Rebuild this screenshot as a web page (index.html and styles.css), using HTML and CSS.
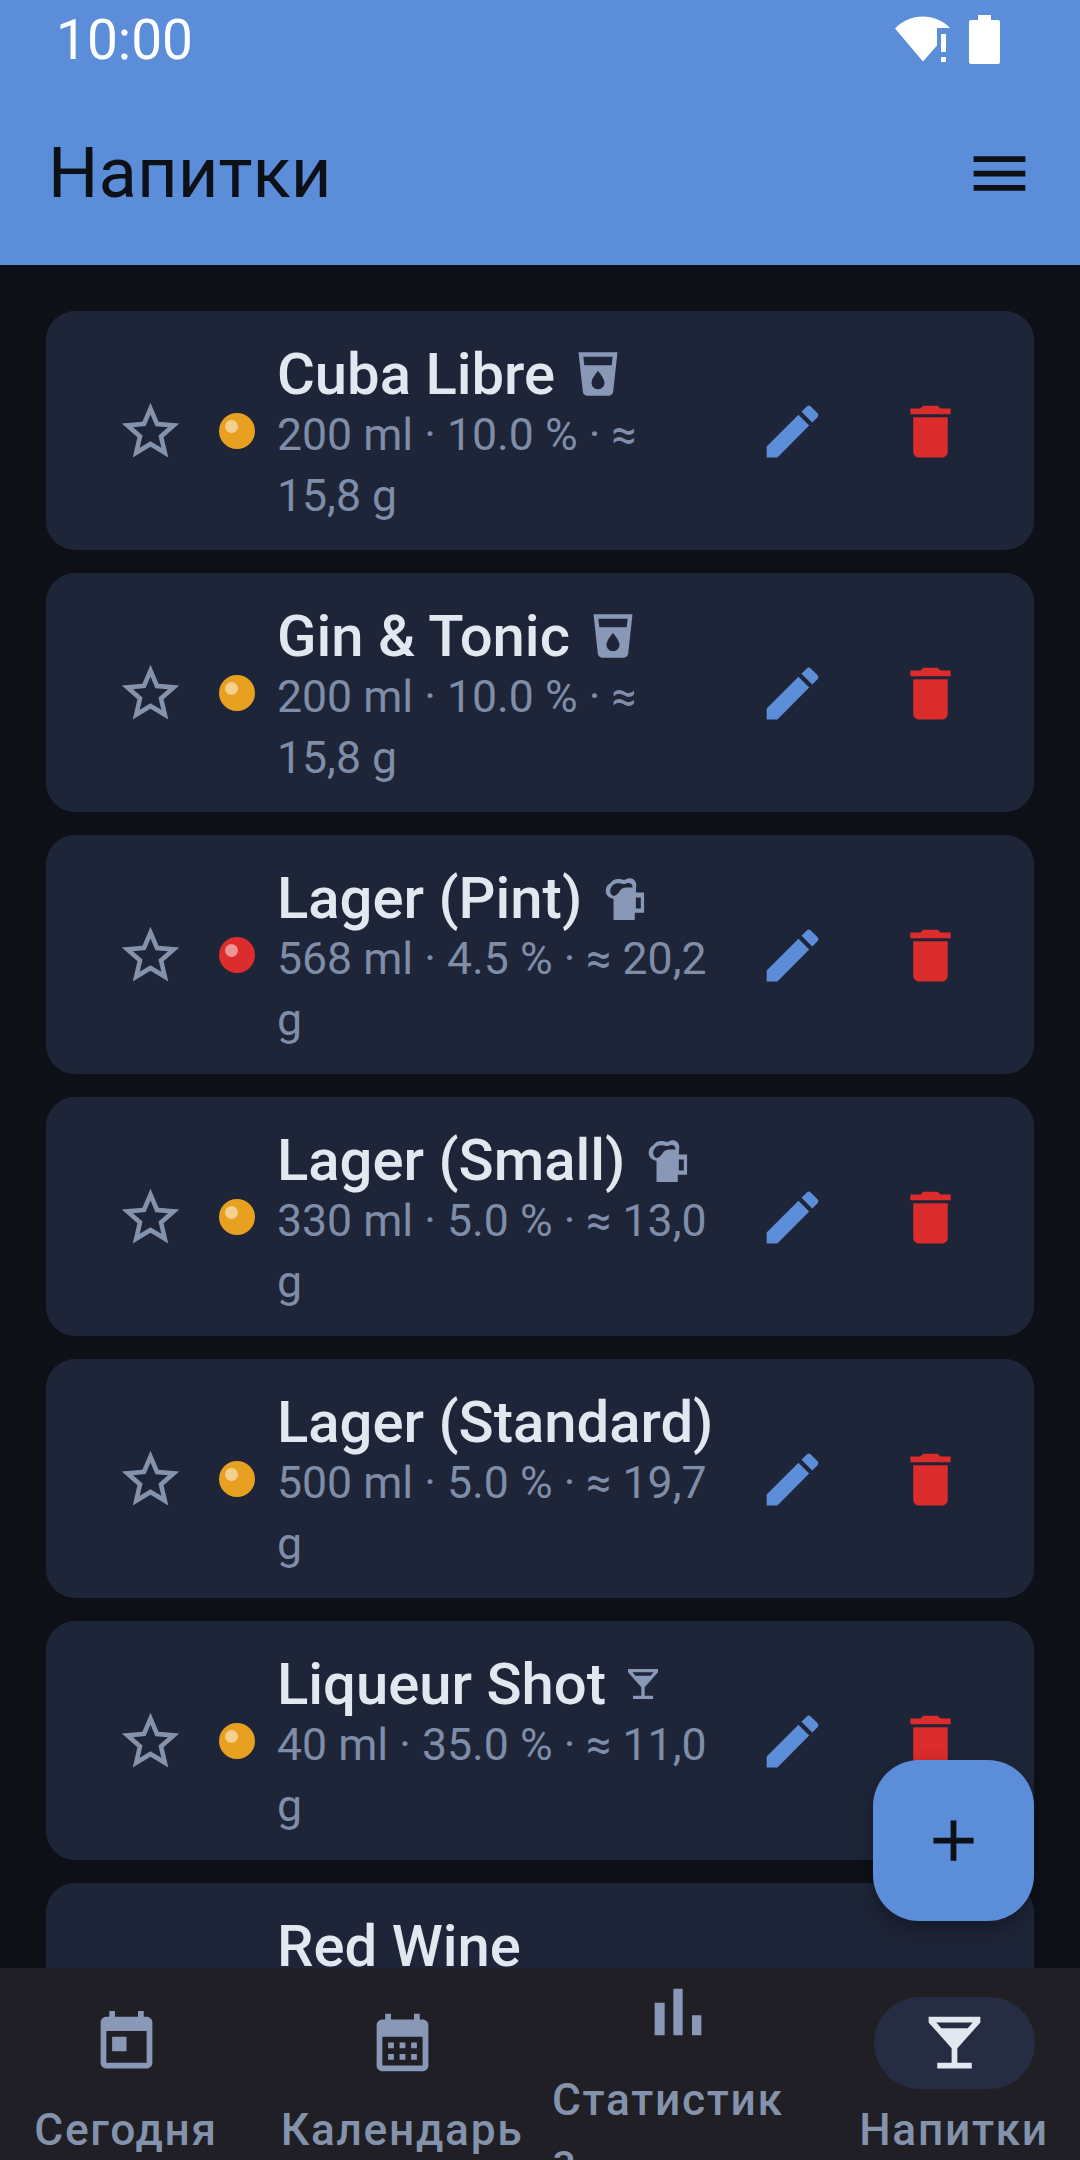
FILE: index.html
```html
<!DOCTYPE html>
<html lang="ru">
<head>
<meta charset="utf-8">
<title>Напитки</title>
<link rel="stylesheet" href="styles.css">
</head>
<body>
<svg class="defs" aria-hidden="true">
  <symbol id="star" viewBox="0 0 24 24"><path d="M22 9.24l-7.19-.62L12 2 9.19 8.63 2 9.24l5.46 4.73L5.82 21 12 17.27 18.18 21l-1.63-7.03L22 9.24zM12 15.4l-3.76 2.27 1-4.28-3.32-2.88 4.38-.38L12 6.1l1.71 4.04 4.38.38-3.32 2.88 1 4.28L12 15.4z"/></symbol>
  <symbol id="edit" viewBox="0 0 24 24"><path d="M3 17.25V21h3.75L17.81 9.94l-3.75-3.75L3 17.25zM20.71 7.04c.39-.39.39-1.02 0-1.41l-2.34-2.34c-.39-.39-1.02-.39-1.41 0l-1.83 1.83 3.75 3.75 1.83-1.83z"/></symbol>
  <symbol id="trash" viewBox="0 0 24 24"><path d="M6 19c0 1.1.9 2 2 2h8c1.1 0 2-.9 2-2V7H6v12zM19 4h-3.5l-1-1h-5l-1 1H5v2h14V4z"/></symbol>
  <symbol id="drink" viewBox="0 0 24 24"><path d="M3 2l2.01 18.23C5.13 21.23 5.97 22 7 22h10c1.03 0 1.87-.77 1.99-1.77L21 2H3zm9 17c-1.66 0-3-1.34-3-3 0-2 3-5.4 3-5.4s3 3.4 3 5.4c0 1.66-1.34 3-3 3zm6.33-11H5.67l-.44-4h13.53l-.43 4z"/></symbol>
  <symbol id="beer" viewBox="0 0 24 24"><path fill-rule="evenodd" d="M6.700 22.100V12.300C4.500 12 3.100 10.500 3.100 8.600C3.100 7 4 5.800 5.200 5.200C6 3.800 7.600 3.100 9 3.200C10 3.200 11 3.500 11.800 3.700C12.600 3.200 13.500 2.900 14.300 2.900C15.900 2.900 17.200 4.300 17.200 6L17 9.500H20.800V18.800H16.500V22.100ZM5.150 8.800C5.150 7 6.600 5.300 8.500 5.200C9.700 5 11 5.600 12 5.500C13 4.900 14.500 4.800 15.300 6L15.500 7.200C13 7 10.800 7 10 8.200C9 10 7.800 11 6.700 11.100C5.800 10.800 5.150 10 5.150 8.800ZM17 11.800H19.300V16.800H17Z"/></symbol>
  <symbol id="bar" viewBox="0 0 24 24"><path d="M21 5V3H3v2l8 9v5H6v2h12v-2h-5v-5l8-9zM7.430 7L5.660 5h12.690l-1.780 2H7.430z"/></symbol>
  <symbol id="today" viewBox="0 0 24 24"><path d="M19 3h-1V1h-2v2H8V1H6v2H5c-1.110 0-1.990.9-1.990 2L3 19c0 1.100.89 2 2 2h14c1.100 0 2-.9 2-2V5c0-1.100-.9-2-2-2zm0 16H5V8h14v11zM7 10h5v5H7z"/></symbol>
  <symbol id="month" viewBox="0 0 24 24"><path d="M19 4h-1V2h-2v2H8V2H6v2H5c-1.110 0-1.990.9-1.990 2L3 20c0 1.100.89 2 2 2h14c1.100 0 2-.9 2-2V6c0-1.100-.9-2-2-2zm0 16H5V10h14v10zM9 14H7v-2h2v2zm4 0h-2v-2h2v2zm4 0h-2v-2h2v2zm-8 4H7v-2h2v2zm4 0h-2v-2h2v2zm4 0h-2v-2h2v2z"/></symbol>
  <symbol id="chart" viewBox="0 0 24 24"><path d="M5 9.200h3V19H5zM10.600 5h2.800v14h-2.800zm5.600 8H19v6h-2.800z"/></symbol>
</svg>
<div class="screen">
  <header class="appbar">
    <div class="status">
      <span class="clock">10:00</span>
      <div class="status-icons">
        <svg class="wifi" viewBox="0 0 56 46"><path d="M0 12.500C7 5 17 .5 28 .5c10 0 20 4 27 11.500H42v17.500L28 45.500z"/><path d="M46 18h5v18h-5zM46 41h5v5h-5z"/></svg>
        <svg class="battery" viewBox="0 0 31 49"><path d="M9 0h13v5h7c1.100 0 2 .9 2 2v40c0 1.100-.9 2-2 2H2c-1.100 0-2-.9-2-2V7c0-1.100.9-2 2-2h7z"/></svg>
      </div>
    </div>
    <div class="toolbar">
      <h1 class="page-title">Напитки</h1>
      <svg class="icon menu" viewBox="0 0 24 24"><path d="M3 18h18v-2H3v2zm0-5h18v-2H3v2zm0-7v2h18V6H3z"/></svg>
    </div>
  </header>

  <main class="list">
    <article class="card">
      <span class="slot"><svg class="icon muted"><use href="#star"/></svg></span>
      <span class="dot orange"></span>
      <div class="info">
        <div class="name-row"><span class="name">Cuba Libre</span><svg class="kind"><use href="#drink"/></svg></div>
        <p class="meta">200 ml · 10.0 % · ≈ 15,8 g</p>
      </div>
      <span class="slot"><svg class="icon blue"><use href="#edit"/></svg></span>
      <span class="slot"><svg class="icon red"><use href="#trash"/></svg></span>
    </article>
    <article class="card">
      <span class="slot"><svg class="icon muted"><use href="#star"/></svg></span>
      <span class="dot orange"></span>
      <div class="info">
        <div class="name-row"><span class="name">Gin &amp; Tonic</span><svg class="kind"><use href="#drink"/></svg></div>
        <p class="meta">200 ml · 10.0 % · ≈ 15,8 g</p>
      </div>
      <span class="slot"><svg class="icon blue"><use href="#edit"/></svg></span>
      <span class="slot"><svg class="icon red"><use href="#trash"/></svg></span>
    </article>
    <article class="card">
      <span class="slot"><svg class="icon muted"><use href="#star"/></svg></span>
      <span class="dot crimson"></span>
      <div class="info">
        <div class="name-row"><span class="name">Lager (Pint)</span><svg class="kind"><use href="#beer"/></svg></div>
        <p class="meta">568 ml · 4.5 % · ≈ 20,2 g</p>
      </div>
      <span class="slot"><svg class="icon blue"><use href="#edit"/></svg></span>
      <span class="slot"><svg class="icon red"><use href="#trash"/></svg></span>
    </article>
    <article class="card">
      <span class="slot"><svg class="icon muted"><use href="#star"/></svg></span>
      <span class="dot orange"></span>
      <div class="info">
        <div class="name-row"><span class="name">Lager (Small)</span><svg class="kind"><use href="#beer"/></svg></div>
        <p class="meta">330 ml · 5.0 % · ≈ 13,0 g</p>
      </div>
      <span class="slot"><svg class="icon blue"><use href="#edit"/></svg></span>
      <span class="slot"><svg class="icon red"><use href="#trash"/></svg></span>
    </article>
    <article class="card">
      <span class="slot"><svg class="icon muted"><use href="#star"/></svg></span>
      <span class="dot orange"></span>
      <div class="info">
        <div class="name-row"><span class="name">Lager (Standard)</span></div>
        <p class="meta">500 ml · 5.0 % · ≈ 19,7 g</p>
      </div>
      <span class="slot"><svg class="icon blue"><use href="#edit"/></svg></span>
      <span class="slot"><svg class="icon red"><use href="#trash"/></svg></span>
    </article>
    <article class="card">
      <span class="slot"><svg class="icon muted"><use href="#star"/></svg></span>
      <span class="dot orange"></span>
      <div class="info">
        <div class="name-row"><span class="name">Liqueur Shot</span><svg class="kind small"><use href="#bar"/></svg></div>
        <p class="meta">40 ml · 35.0 % · ≈ 11,0 g</p>
      </div>
      <span class="slot"><svg class="icon blue"><use href="#edit"/></svg></span>
      <span class="slot"><svg class="icon red"><use href="#trash"/></svg></span>
    </article>
    <article class="card">
      <span class="slot"><svg class="icon muted"><use href="#star"/></svg></span>
      <span class="dot orange"></span>
      <div class="info">
        <div class="name-row"><span class="name">Red Wine</span></div>
        <p class="meta">150 ml · 12.0 % · ≈ 14,2 g</p>
      </div>
      <span class="slot"><svg class="icon blue"><use href="#edit"/></svg></span>
      <span class="slot"><svg class="icon red"><use href="#trash"/></svg></span>
    </article>
  </main>

  <button class="fab" type="button" aria-label="Добавить">
    <svg class="icon" viewBox="0 0 24 24"><path d="M19 13h-6v6h-2v-6H5v-2h6V5h2v6h6v2z"/></svg>
  </button>

  <nav class="nav">
    <div class="tab"><span class="pill"><svg class="icon"><use href="#today"/></svg></span><span class="tab-label">Сегодня</span></div>
    <div class="tab"><span class="pill"><svg class="icon"><use href="#month"/></svg></span><span class="tab-label">Календарь</span></div>
    <div class="tab"><span class="pill"><svg class="icon chart"><use href="#chart"/></svg></span><span class="tab-label">Статистика</span></div>
    <div class="tab active"><span class="pill"><svg class="icon"><use href="#bar"/></svg></span><span class="tab-label">Напитки</span></div>
  </nav>
</div>
</body>
</html>
```
FILE: styles.css
```css
* { box-sizing: border-box; }
html, body { margin: 0; padding: 0; }
body { background: #0d1017; font-family: Roboto, "Noto Sans", sans-serif; }
.defs { display: none; }

.screen {
  position: relative;
  width: 1080px;
  height: 2160px;
  display: flex;
  flex-direction: column;
  overflow: hidden;
}

.appbar { background: #5b8dd9; flex: none; height: 265px; }
.status {
  height: 81px;
  display: flex;
  align-items: center;
  justify-content: space-between;
  padding: 0 80px 3px 56px;
}
.clock { color: #fff; font-size: 55px; line-height: 78px; padding-top: 2px; }
.status-icons { display: flex; align-items: center; gap: 18px; }
.wifi { width: 56px; height: 46px; fill: #fff; }
.battery { width: 31px; height: 49px; fill: #fff; }

.toolbar {
  height: 184px;
  display: flex;
  align-items: center;
  justify-content: space-between;
  padding: 0 46px 0 48px;
}
.page-title { margin: 0 0 2px; font-size: 70.7px; font-weight: 400; color: #0d1017; }
.icon { width: 69px; height: 69px; display: block; flex: none; }
.icon.chart { width: 80px; height: 80px; }
.menu { fill: #0d1017; }

.list {
  flex: 1;
  min-height: 0;
  overflow: hidden;
  padding: 46px 46px 0;
  display: flex;
  flex-direction: column;
  gap: 23px;
}
.card {
  flex: none;
  height: 239px;
  background: #1e2538;
  border-radius: 29px;
  padding: 2px 0 0 47px;
  display: flex;
  align-items: center;
}
.slot { width: 115px; height: 115px; flex: none; display: flex; align-items: center; justify-content: center; }
.slot + .slot { margin-left: 23px; }
.muted { fill: #8492ab; }
.blue { fill: #5b8dd9; }
.red { fill: #dc2c2c; }

.dot { position: relative; width: 36px; height: 36px; border-radius: 50%; flex: none; margin: 0 22px 2px 11px; }
.dot::after {
  content: "";
  position: absolute;
  left: 6px;
  top: 7px;
  width: 13px;
  height: 13px;
  border-radius: 50%;
  background: rgba(255, 255, 255, 0.5);
}
.orange { background: #e8a020; }
.crimson { background: #dc2c2c; }

.info { width: 440px; flex: none; margin: 1px 18px 0 0; }
.name-row { display: flex; align-items: center; gap: 17px; height: 67px; padding-top: 5px; padding-bottom: 1px; }
.name { font-size: 58px; font-weight: 500; color: #e2e8f0; line-height: 60px; white-space: nowrap; }
.kind { width: 52px; height: 52px; flex: none; fill: #8a98b8; }
.kind.small { width: 40px; height: 40px; }
.meta { margin: 0; font-size: 44.6px; line-height: 60.4px; color: #7f8da8; }

.fab {
  position: absolute;
  left: 873px;
  top: 1760px;
  width: 161px;
  height: 161px;
  border: 0;
  padding: 0;
  border-radius: 46px;
  background: #5b8dd9;
  fill: #0d1017;
  display: flex;
  align-items: center;
  justify-content: center;
  box-shadow: 0 8px 20px rgba(0, 0, 0, 0.3);
}

.nav {
  position: relative;
  flex: none;
  height: 192px;
  padding-top: 29px;
  background: #1f1f25;
  display: flex;
  justify-content: center;
  align-items: center;
  overflow: hidden;
}
.tab {
  flex: none;
  width: 276px;
  display: flex;
  flex-direction: column;
  align-items: center;
  gap: 11.5px;
}
.pill {
  width: 161px;
  height: 92px;
  border-radius: 46px;
  display: flex;
  align-items: center;
  justify-content: center;
  fill: #8a98b8;
}
.tab-label {
  max-width: 252px;
  font-size: 44.3px;
  line-height: 60.4px;
  font-weight: 500;
  letter-spacing: 1.7px;
  color: #8492ab;
  overflow-wrap: anywhere;
}
.active .pill { background: #262d43; fill: #e2e8f0; }
```
